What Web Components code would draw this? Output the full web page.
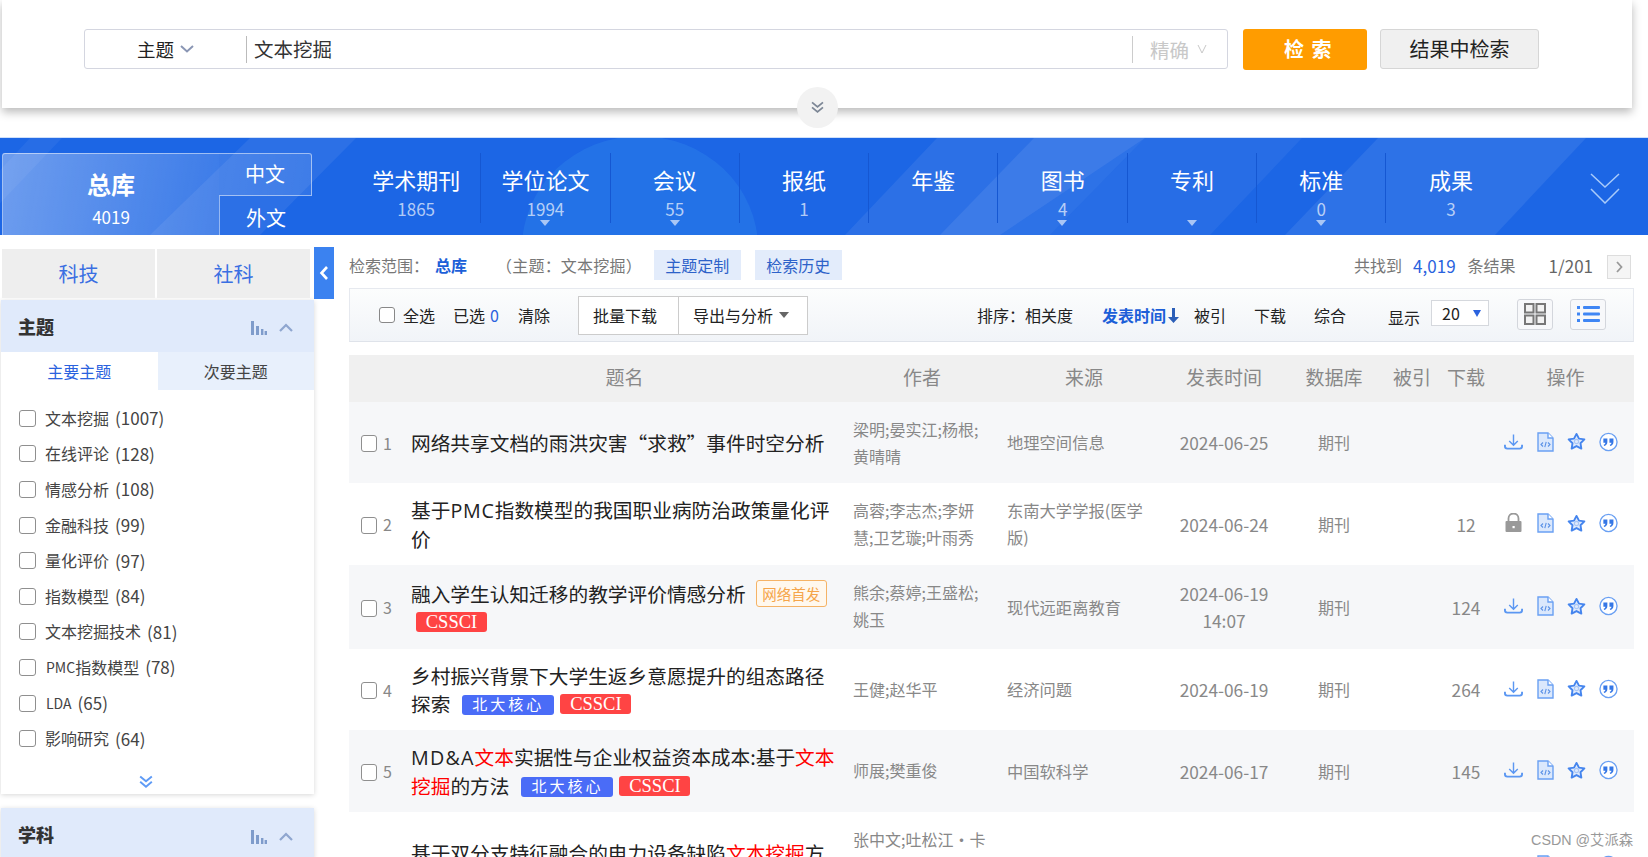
<!DOCTYPE html>
<html lang="zh">
<head>
<meta charset="utf-8">
<title>文本挖掘</title>
<style>
    html, body {
        margin: 0;
        height: 857px;
        overflow: hidden;
        background: #fff;
        font-family: "Noto Sans CJK SC", "Noto Sans", sans-serif;
        color: #333;
    }
</style>
</head>
<body>
<search-card></search-card>
<db-band>
    <db-item name="学术期刊" count="1865"></db-item>
    <db-item name="学位论文" count="1994" caret></db-item>
    <db-item name="会议" count="55" caret></db-item>
    <db-item name="报纸" count="1"></db-item>
    <db-item name="年鉴"></db-item>
    <db-item name="图书" count="4" caret></db-item>
    <db-item name="专利" caret></db-item>
    <db-item name="标准" count="0" caret></db-item>
    <db-item name="成果" count="3"></db-item>
</db-band>
<page-body>
    <side-bar slot="side">
        <facet-panel name="主题" tabs>
            <facet-item label="文本挖掘" count="1007"></facet-item>
            <facet-item label="在线评论" count="128"></facet-item>
            <facet-item label="情感分析" count="108"></facet-item>
            <facet-item label="金融科技" count="99"></facet-item>
            <facet-item label="量化评价" count="97"></facet-item>
            <facet-item label="指数模型" count="84"></facet-item>
            <facet-item label="文本挖掘技术" count="81"></facet-item>
            <facet-item latin="PMC" label="指数模型" count="78"></facet-item>
            <facet-item latin="LDA" count="65"></facet-item>
            <facet-item label="影响研究" count="64"></facet-item>
        </facet-panel>
        <facet-panel name="学科"></facet-panel>
    </side-bar>
    <result-head></result-head>
    <result-tools></result-tools>
    <result-columns></result-columns>
    <result-row n="1" h="81" shade author="梁明;晏实江;杨根;&#10;黄晴晴" source="地理空间信息" date="2024-06-25">网络共享文档的雨洪灾害“求救”事件时空分析</result-row>
    <result-row n="2" h="82" author="高蓉;李志杰;李妍&#10;慧;卫艺璇;叶雨秀" source="东南大学学报(医学&#10;版)" date="2024-06-24" dl="12" locked>基于<wide-latin style="letter-spacing:.8px">PMC</wide-latin>指数模型的我国职业病防治政策量化评<br>价</result-row>
    <result-row n="3" h="84" shade author="熊余;蔡婷;王盛松;&#10;姚玉" source="现代远距离教育" date="2024-06-19&#10;14:07" dl="124">融入学生认知迁移的教学评价情感分析<row-badge kind="first">网络首发</row-badge><br><row-badge kind="cssci" style="margin-left:5px">CSSCI</row-badge></result-row>
    <result-row n="4" h="81" author="王健;赵华平" source="经济问题" date="2024-06-19" dl="264">乡村振兴背景下大学生返乡意愿提升的组态路径<br>探索<row-badge kind="pku">北大核心</row-badge><row-badge kind="cssci">CSSCI</row-badge></result-row>
    <result-row n="5" h="82" shade author="师展;樊重俊" source="中国软科学" date="2024-06-17" dl="145"><wide-latin style="letter-spacing:1.200px">MD&amp;A</wide-latin><hit-word>文本</hit-word>实据性与企业权益资本成本:基于<hit-word>文本</hit-word><br><hit-word>挖掘</hit-word>的方法<row-badge kind="pku">北大核心</row-badge><row-badge kind="cssci">CSSCI</row-badge></result-row>
    <result-row n="6" h="108" author="张中文;吐松江·卡&#10;" source="" date="" dl="">基于双分支特征融合的电力设备缺陷<hit-word>文本挖掘</hit-word>方<br>&nbsp;</result-row>
</page-body>
<water-mark>CSDN @艾派森</water-mark>

<script>
const chevronDouble = (color, w = 16) => `<svg width="${w}" height="${w * .85}" viewBox="0 0 16 14" fill="none" stroke="${color}" stroke-width="2"><path d="M2 1.5l6 5 6-5M2 7l6 5 6-5"/></svg>`;

const barsIcon = `<svg width="16" height="14" viewBox="0 0 16 14" fill="#7f9ccb"><rect x="0" y="0" width="3" height="14"/><rect x="5" y="5" width="3" height="9"/><rect x="10" y="8" width="2.4" height="6"/><rect x="13.6" y="10" width="2.4" height="4"/></svg>`;

const upIcon = `<svg width="14" height="9" viewBox="0 0 14 9" fill="none" stroke="#8fa6cf" stroke-width="2.2"><path d="M1 8l6-6 6 6"/></svg>`;

const icons = {
    download: `<svg width="20" height="18" viewBox="0 0 20 18" fill="none" stroke="#5b97f2" stroke-width="1.5"><path d="M10 1v11M5.5 8l4.5 4.5L14.5 8"/><path d="M1 12v1.5c0 1.4 1 2.5 2.5 2.5h13c1.500 0 2.500-1.100 2.500-2.500V12" stroke-width="2"/></svg>`,
    lock: `<svg width="19" height="20" viewBox="0 0 19 20"><path d="M4.500 9V5.500a5 5 0 0 1 10 0V9" fill="none" stroke="#999" stroke-width="1.800"/><rect x="1.500" y="8" width="16" height="11" rx="1" fill="#999"/><rect x="8.500" y="13" width="2.200" height="2.200" fill="#fff"/></svg>`,
    file: `<svg width="17" height="20" viewBox="0 0 17 20" fill="#dbe8fc" stroke="#6aa0f3" stroke-width="1.400"><path d="M1 1h10l5 5v13H1z"/><path d="M11 1v5h5" fill="#fff"/><path d="M6 10.500l-2 2 2 2M11 10.500l2 2-2 2M9.200 9.800l-1.400 5.400" fill="none" stroke="#5c92e6" stroke-width="1.100"/></svg>`,
    star: `<svg width="22" height="21" viewBox="0 0 20 19" fill="#dfeafc" stroke="#4585ee" stroke-width="2" stroke-linejoin="round"><path d="M10 1.500l2.600 5 5.700.8-4.100 4 .9 5.700-5.100-2.700L4.900 17l.9-5.700-4.100-4 5.700-.8z"/><circle cx="10" cy="9.500" r="2.200" fill="none" stroke="#a9c6f5" stroke-width="1.200"/></svg>`,
    quote: `<svg width="20" height="20" viewBox="0 0 20 20"><circle cx="10" cy="10" r="9" fill="#fff" stroke="#6aa0f3" stroke-width="1.400"/><path d="M4.600 6.200h4.200v3.800c0 2.200-1.200 3.600-3.400 4.200l-.5-1.200c1.200-.4 1.700-1.100 1.800-2.100H4.600zM11 6.200h4.200v3.800c0 2.200-1.200 3.600-3.400 4.200l-.5-1.200c1.200-.4 1.700-1.100 1.800-2.100H11z" fill="#3577e6"/></svg>`,
};

class SearchCard extends HTMLElement {
    constructor() {
        super();
        this.attachShadow({ mode: 'open' }).innerHTML = `
<style>
    :host {
        display: flex;
        position: relative;
        box-sizing: border-box;
        align-items: flex-start;
        margin-left: 2px;
        width: 1630px;
        height: 108px;
        padding: 29px 0 0 82px;
        background: #fff;
        box-shadow: 0 4px 9px rgba(0,0,0,.28);
    }
    .box {
        display: flex;
        align-items: center;
        box-sizing: border-box;
        width: 1144px;
        height: 40px;
        border: 1px solid #d4d6e0;
        border-radius: 3px;
    }
    .field {
        display: flex;
        align-items: center;
        gap: 6px;
        box-sizing: border-box;
        width: 162px;
        height: 27px;
        padding-left: 52px;
        border-right: 1px solid #bbb;
        font-size: 18.500px;
        color: #222;
    }
    .query {
        flex: 1;
        padding-left: 7px;
        font-size: 19.500px;
        color: #333;
        line-height: 25px;
        margin-top: -2px;
    }
    .exact {
        display: flex;
        align-items: center;
        box-sizing: border-box;
        width: 95px;
        height: 27px;
        padding-left: 17px;
        gap: 8px;
        border-left: 1px solid #ccc;
        font-size: 19.500px;
        color: #c8c8c8;
    }
    .go {
        box-sizing: border-box;
        width: 124px;
        height: 41px;
        margin-left: 15px;
        padding-left: 7px;
        background: #ff9c00;
        border-radius: 3px;
        color: #fff;
        font-size: 20px;
        font-weight: 700;
        letter-spacing: 1.500px;
        line-height: 40px;
        text-align: center;
    }
    .inner {
        box-sizing: border-box;
        width: 159px;
        height: 40px;
        margin-left: 13px;
        background: #f0f0f0;
        border: 1px solid #d6d6d6;
        border-radius: 3px;
        color: #222;
        font-size: 20px;
        line-height: 38px;
        text-align: center;
    }
    .more {
        position: absolute;
        left: 795px;
        top: 87px;
        width: 41px;
        height: 41px;
        display: flex;
        align-items: center;
        justify-content: center;
        border-radius: 50%;
        background: #f2f2f2;
    }
</style>
<div class="box">
    <div class="field">主题 <svg width="14" height="8" viewBox="0 0 14 8" fill="none" stroke="#8a96b4" stroke-width="2"><path d="M1 1l6 5.500L13 1"/></svg></div>
    <div class="query">文本挖掘</div>
    <div class="exact">精确 <svg width="10" height="10" viewBox="0 0 10 10" fill="none" stroke="#c8c8c8" stroke-width="1"><path d="M1 1l4 8 4-8"/></svg></div>
</div>
<div class="go">检 索</div>
<div class="inner">结果中检索</div>
<div class="more">${chevronDouble('#7d8796', 15)}</div>`;
    }
}
customElements.define('search-card', SearchCard);

class DbBand extends HTMLElement {
    constructor() {
        super();
        this.attachShadow({ mode: 'open' }).innerHTML = `
<style>
    :host {
        display: flex;
        position: relative;
        box-sizing: border-box;
        height: 98px;
        margin-top: 29px;
        padding: 15px 0 0 2px;
        background: #1c66e5;
        overflow: hidden;
        border-top: 1px solid #cfe0fa;
    }
    .art { position: absolute; left: 0; top: 0; }
    .total {
        position: relative;
        display: flex;
        width: 310px;
        height: 82px;
        color: #fff;
    }
    .main {
        box-sizing: border-box;
        width: 217px;
        padding-top: 12px;
        text-align: center;
        background: linear-gradient(100deg, rgba(255,255,255,.36), rgba(255,255,255,.14));
        border: solid rgba(255,255,255,.5);
        border-width: 1px 0 0 1px;
        border-top-left-radius: 3px;
    }
    .main b { display: block; font-size: 24px; line-height: 36px; }
    .main span { display: block; font-size: 17px; line-height: 24px; margin-top: 3px; }
    .langs { width: 93px; }
    .langs div {
        box-sizing: border-box;
        text-align: center;
        font-size: 20px;
    }
    .zh {
        height: 43px;
        line-height: 40px;
        background: linear-gradient(100deg, rgba(255,255,255,.14), rgba(255,255,255,.09));
        border: solid rgba(255,255,255,.5);
        border-width: 1px 1px 1px 0;
        border-top-right-radius: 3px;
    }
    .en {
        height: 39px;
        line-height: 44px;
        border-left: 1px solid rgba(255,255,255,.5);
    }
    .items { position: relative; display: flex; margin-left: 40px; }
    .fold { position: absolute; left: 1590px; top: 35px; }
</style>
<svg class="art" width="1648" height="97" viewBox="0 0 1648 97" fill="#fff">
    <polygon points="30,0 62,0 -30,97 -60,97" opacity=".05"/>
    <polygon points="250,0 356,0 260,97 150,97" opacity=".07"/>
    <ellipse cx="640" cy="110" rx="118" ry="112" fill="#2a7cea" opacity=".55"/>
    <polygon points="937,0 1145,0 1000,97 845,97" opacity=".07"/>
    <polygon points="1034,0 1145,0 1050,97 940,97" opacity=".08"/>
    <polygon points="1145,0 1302,0 1210,97 1050,97" opacity=".05"/>
    <polygon points="1378,0 1586,0 1495,97 1285,97" opacity=".08"/>
</svg>
<div class="total">
    <div class="main"><b>总库</b><span>4019</span></div>
    <div class="langs">
        <div class="zh">中文</div>
        <div class="en">外文</div>
    </div>
</div>
<div class="items"><slot></slot></div>
<svg class="fold" width="30" height="31" viewBox="0 0 30 31" fill="none" stroke="#a9cbfa" stroke-width="1.500"><path d="M1 1l14 13L29 1M1 16l14 14 14-14"/></svg>`;
    }
}
customElements.define('db-band', DbBand);

class DbItem extends HTMLElement {
    constructor() {
        super();
        const count = this.getAttribute('count');
        this.attachShadow({ mode: 'open' }).innerHTML = `
<style>
    :host {
        display: block;
        position: relative;
        box-sizing: border-box;
        width: 129.300px;
        height: 70px;
        border-right: 1px solid #1557d2;
        text-align: center;
        color: #fff;
    }
    :host(:last-child) { border-right: 0; }
    .name { font-size: 22px; line-height: 30px; margin-top: 11px; }
    .count { font-size: 17px; line-height: 20px; margin-top: 5px; color: rgba(255,255,255,.68); }
    .caret {
        position: absolute;
        left: 59px;
        bottom: -3px;
        width: 0;
        height: 0;
        border: 5.500px solid transparent;
        border-top: 6px solid #a9c6f5;
        border-bottom: 0;
    }
</style>
<div class="name">${this.getAttribute('name')}</div>
${count !== null ? `<div class="count">${count}</div>` : ''}
${this.hasAttribute('caret') ? '<div class="caret"></div>' : ''}`;
    }
}
customElements.define('db-item', DbItem);

class PageBody extends HTMLElement {
    constructor() {
        super();
        this.attachShadow({ mode: 'open' }).innerHTML = `
<style>
    :host { display: flex; align-items: flex-start; padding-left: 1px; }
    .toggle {
        display: flex;
        align-items: center;
        justify-content: center;
        flex: none;
        width: 20px;
        height: 52px;
        margin-top: 12px;
        background: #3b82f0;
    }
    main { flex: none; width: 1285px; margin-left: 15px; padding-top: 15px; }
</style>
<slot name="side"></slot>
<div class="toggle"><svg width="10" height="16" viewBox="0 0 10 16" fill="none" stroke="#fff" stroke-width="2.600"><path d="M8 2L2.500 8 8 14"/></svg></div>
<main><slot></slot></main>`;
    }
}
customElements.define('page-body', PageBody);

class SideBar extends HTMLElement {
    constructor() {
        super();
        this.attachShadow({ mode: 'open' }).innerHTML = `
<style>
    :host { display: block; flex: none; width: 313px; padding-top: 14px; }
    .tabs { display: flex; gap: 2px; padding: 0 4px 0 1px; }
    .tabs div {
        flex: 1;
        height: 49px;
        line-height: 49px;
        text-align: center;
        background: #eee;
        color: #3a6fe2;
        font-size: 20px;
    }
</style>
<div class="tabs"><div>科技</div><div>社科</div></div>
<slot></slot>`;
    }
}
customElements.define('side-bar', SideBar);

class FacetPanel extends HTMLElement {
    constructor() {
        super();
        const tabs = this.hasAttribute('tabs');
        this.attachShadow({ mode: 'open' }).innerHTML = `
<style>
    :host {
        display: block;
        margin-top: 2px;
        background: #fff;
        box-shadow: 0 1px 5px rgba(0,0,0,.16);
    }
    :host(:not([tabs])) { margin-top: 14px; }
    .head {
        display: flex;
        align-items: center;
        height: 52px;
        padding-left: 17px;
        background: #e0eafb;
        font-size: 18px;
        font-weight: 700;
        color: #333;
    }
    .head b { flex: 1; }
    .head svg { margin-top: 3px; }
    .head svg:last-child { margin: 3px 21px 0 12px; }
    :host(:not([tabs])) .head svg { margin-top: 6px; }
    .sub { display: flex; height: 38px; line-height: 38px; font-size: 16px; text-align: center; }
    .sub div { flex: 1; background: #e8f0fc; color: #444; }
    .sub div:first-child { background: #fff; color: #2a62de; }
    .list { padding-top: 10px; }
    .foot { display: flex; justify-content: center; height: 38px; padding: 19px 24px 0 0; box-sizing: border-box; }
</style>
<div class="head"><b>${this.getAttribute('name')}</b>${barsIcon}${upIcon}</div>
${tabs ? `<div class="sub"><div>主要主题</div><div>次要主题</div></div>
<div class="list"><slot></slot></div>
<div class="foot">${chevronDouble('#5f9bf6', 16)}</div>` : ''}`;
    }
}
customElements.define('facet-panel', FacetPanel);

class FacetItem extends HTMLElement {
    constructor() {
        super();
        const latin = this.getAttribute('latin');
        const label = this.getAttribute('label') || '';
        this.attachShadow({ mode: 'open' }).innerHTML = `
<style>
    :host {
        display: flex;
        align-items: center;
        height: 35.6px;
        padding-left: 18px;
        font-size: 16px;
        color: #444;
    }
    i {
        flex: none;
        box-sizing: border-box;
        width: 17px;
        height: 17px;
        margin: 1px 9px 0 0;
        border: 1.500px solid #8f8f8f;
        border-radius: 3px;
        background: #fff;
    }
    small { font-size: 14px; margin-left: 1px; }
    span { margin-left: 6px; font-size: 17px; }
</style>
<i></i>${latin ? `<small>${latin}</small>` : ''}${label}<span>(${this.getAttribute('count')})</span>`;
    }
}
customElements.define('facet-item', FacetItem);

class ResultHead extends HTMLElement {
    constructor() {
        super();
        this.attachShadow({ mode: 'open' }).innerHTML = `
<style>
    :host {
        display: flex;
        align-items: center;
        height: 30px;
        font-size: 16px;
        color: #777;
    }
    b { margin-left: 6px; color: #1c5fd8; }
    .scope { margin-left: 29px; letter-spacing: .2px; }
    .pill {
        height: 30px;
        line-height: 30px;
        padding: 0 11.500px;
        background: #e3ecfb;
        color: #2d62c9;
    }
    .pill.first { margin-left: 12px; }
    .pill + .pill { margin-left: 14px; }
    .right { margin-left: auto; display: flex; align-items: center; }
    .right em { font-style: normal; font-size: 17px; color: #2a62de; margin: 0 12px 0 11px; }
    .page { margin-left: 33px; font-size: 17px; color: #666; }
    .next {
        display: flex;
        align-items: center;
        justify-content: center;
        box-sizing: border-box;
        width: 24px;
        height: 24px;
        margin: 3px 3px 0 14px;
        border: 1px solid #ddd;
        background: #f5f5f5;
    }
</style>
<span>检索范围：</span><b>总库</b>
<span class="scope">（主题：文本挖掘）</span>
<span class="pill first">主题定制</span><span class="pill">检索历史</span>
<div class="right">
    共找到<em>4,019</em>条结果
    <span class="page">1/201</span>
    <span class="next"><svg width="7" height="12" viewBox="0 0 7 12" fill="none" stroke="#999" stroke-width="1.800"><path d="M1 1l4.500 5L1 11"/></svg></span>
</div>`;
    }
}
customElements.define('result-head', ResultHead);

class ResultTools extends HTMLElement {
    constructor() {
        super();
        this.attachShadow({ mode: 'open' }).innerHTML = `
<style>
    :host {
        display: flex;
        align-items: center;
        box-sizing: border-box;
        height: 54px;
        margin-top: 8px;
        padding-left: 29px;
        border: 1px solid #e6e9ef;
        border-bottom: 1.500px solid #dfe3ea;
        background: linear-gradient(#fcfdfd, #f1f4f8);
        font-size: 16px;
        color: #222;
    }
    i {
        box-sizing: border-box;
        width: 16px;
        height: 16px;
        margin-right: 8px;
        border: 1.500px solid #888;
        border-radius: 3px;
        background: #fff;
    }
    .sel { margin-left: 18px; }
    .sel em { font-style: normal; color: #2a62de; margin-left: 5px; }
    .clear { margin-left: 19px; }
    .btns { display: flex; margin-left: 28px; background: #fff; border: 1px solid #ccc; height: 37px; }
    .btns > span { display: flex; align-items: center; justify-content: center; gap: 6px; white-space: nowrap; }
    .btns > span:first-child { box-sizing: border-box; width: 100px; padding-right: 7px; border-right: 1px solid #ccc; }
    .btns > span:last-child { box-sizing: border-box; width: 128px; padding-right: 4px; }
    .tri { width: 0; height: 0; border: 5px solid transparent; border-top: 6px solid #666; border-bottom: 0; }
    .sort { margin-left: auto; display: flex; align-items: center; }
    .sort b { margin-left: 29px; color: #1c5fd8; display: flex; align-items: center; gap: 2px; }
    .sort u { text-decoration: none; margin-left: 28px; }
    .sort u:nth-of-type(1) { margin-left: 15px; }
    .show { margin-left: 42px; padding-top: 4px; }
    .num {
        display: flex;
        align-items: center;
        justify-content: space-between;
        box-sizing: border-box;
        width: 58px;
        height: 26px;
        margin: -4px 0 0 11px;
        padding: 0 7px 0 10px;
        border: 1px solid #d5d8dd;
        background: #fff;
        font-size: 16px;
    }
    .blue { width: 0; height: 0; border: 4.500px solid transparent; border-top: 7px solid #2a62de; border-bottom: 0; }
    .view {
        display: flex;
        align-items: center;
        justify-content: center;
        box-sizing: border-box;
        width: 36px;
        height: 31px;
        margin: -2px 0 0 17px;
        border: 1px solid #d3d6dc;
        border-radius: 3px;
        background: #f7f8fa;
    }
    .view.first { margin-left: 28px; }
    .view.last { margin-right: 27px; }
</style>
<i></i>全选
<span class="sel">已选<em>0</em></span>
<span class="clear">清除</span>
<div class="btns"><span>批量下载</span><span>导出与分析 <em class="tri"></em></span></div>
<div class="sort">
    <span>排序：相关度</span>
    <b>发表时间<svg width="11" height="15" viewBox="0 0 11 15" fill="#2c5fb8"><path d="M4 0h3v9h4l-5.500 6L0 9h4z"/></svg></b>
    <u>被引</u><u>下载</u><u>综合</u>
    <span class="show">显示</span>
    <span class="num">20<span class="blue"></span></span>
    <span class="view first"><svg width="22" height="22" viewBox="0 0 22 22" fill="#f2f2f2" stroke="#777" stroke-width="2"><rect x="1" y="1" width="8.500" height="8.500"/><rect x="12.500" y="1" width="8.500" height="8.500"/><rect x="1" y="12.500" width="8.500" height="8.500"/><rect x="12.500" y="12.500" width="8.500" height="8.500"/></svg></span>
    <span class="view last"><svg width="23" height="18" viewBox="0 0 23 18" fill="#3f86f4"><rect x="0" y="1" width="3" height="3"/><rect x="6" y="1" width="17" height="3" rx="1"/><rect x="0" y="7.500" width="3" height="3"/><rect x="6" y="7.500" width="17" height="3" rx="1"/><rect x="0" y="14" width="3" height="3"/><rect x="6" y="14" width="17" height="3" rx="1"/></svg></span>
</div>`;
    }
}
customElements.define('result-tools', ResultTools);

// column widths shared by the header and the rows
const resultColumns = '62px 441px 155px 162px 110px 110px 46px 62px 137px';

class ResultColumns extends HTMLElement {
    constructor() {
        super();
        this.attachShadow({ mode: 'open' }).innerHTML = `
<style>
    :host {
        display: grid;
        grid-template-columns: ${resultColumns};
        align-items: center;
        height: 47px;
        margin-top: 13px;
        background: #f0f0f0;
        color: #888;
        font-size: 19px;
        line-height: 26px;
        text-align: center;
    }
    span { margin-top: -3px; white-space: nowrap; }
    .t { grid-column: 1 / 3; padding-left: 48px; }
    .a { margin-left: -15px; }
    .s { margin-left: -8px; }
</style>
<span class="t">题名</span><span class="a">作者</span><span class="s">来源</span><span>发表时间</span><span>数据库</span><span>被引</span><span>下载</span><span>操作</span>`;
    }
}
customElements.define('result-columns', ResultColumns);

class ResultRow extends HTMLElement {
    constructor() {
        super();
        const attr = name => this.getAttribute(name) || '';
        const lines = text => text.split('\n').join('<br>');
        this.attachShadow({ mode: 'open' }).innerHTML = `
<style>
    :host {
        display: grid;
        grid-template-columns: ${resultColumns};
        align-items: center;
        height: ${attr('h')}px;
        font-size: 16px;
        color: #888;
    }
    :host([shade]) { background: #f6f7f9; }
    .no { display: flex; align-items: center; padding-left: 12px; font-size: 16px; color: #888; }
    i {
        flex: none;
        box-sizing: border-box;
        width: 16px;
        height: 17px;
        margin: 2px 6px 0 0;
        border: 1.500px solid #8f8f8f;
        border-radius: 3px;
        background: #fff;
    }
    .title { font-size: 19.700px; line-height: 27.500px; color: #222; white-space: nowrap; }
    .auth, .src { line-height: 27px; white-space: nowrap; }
    .src { font-size: 16.300px; }
    .auth { padding-left: 1px; line-height: 27.300px; }
    .auth { align-self: start; padding-top: 13.500px; }
    .auth.one { align-self: center; padding-top: 0; }
    .mid { text-align: center; line-height: 27px; }
    .num { font-size: 17.300px; }
    .ops { display: flex; align-items: center; padding-left: 7px; gap: 12.500px; margin-top: -2px; }
    .ops span { display: flex; justify-content: center; width: 19px; }
</style>
<div class="no"><i></i>${attr('n')}</div>
<div class="title"><slot></slot></div>
<div class="auth ${attr('author').includes('\n') ? '' : 'one'}">${lines(attr('author'))}</div>
<div class="src">${lines(attr('source'))}</div>
<div class="mid num">${lines(attr('date'))}</div>
<div class="mid">${attr('date') ? '期刊' : ''}</div>
<div class="mid"></div>
<div class="mid num">${attr('dl')}</div>
<div class="ops">
    <span>${this.hasAttribute('locked') ? icons.lock : icons.download}</span>
    <span>${icons.file}</span>
    <span>${icons.star}</span>
    <span>${icons.quote}</span>
</div>`;
    }
}
customElements.define('result-row', ResultRow);

class RowBadge extends HTMLElement {
    constructor() {
        super();
        this.attachShadow({ mode: 'open' }).innerHTML = `
<style>
    :host {
        display: inline-block;
        box-sizing: border-box;
        vertical-align: 1.500px;
        margin-left: 6px;
        border-radius: 3px;
        color: #fff;
        height: 20px;
        line-height: 20px;
        width: 71px;
        text-align: center;
        font-size: 18.500px;
        font-family: "Liberation Serif", "Noto Sans CJK SC", serif;
    }
    :host([kind="cssci"]) { background: #ff4444; }
    :host([kind="pku"]) { background: #4a6cf7; margin-left: 12px; width: 92px; letter-spacing: 3px; font-size: 15px; }
    :host([kind="first"]) {
        width: 71px;
        height: 27px;
        line-height: 25px;
        margin-left: 10px;
        vertical-align: 2px;
        background: #fff8ee;
        border: 1px solid #f5b366;
        color: #f5a54a;
        font-size: 14.500px;
        font-family: "Noto Sans CJK SC", sans-serif;
    }
</style>
<slot></slot>`;
    }
}
customElements.define('row-badge', RowBadge);

class HitWord extends HTMLElement {
    constructor() {
        super();
        this.attachShadow({ mode: 'open' }).innerHTML = `<style>:host { color: #f00; }</style><slot></slot>`;
    }
}
customElements.define('hit-word', HitWord);

class WideLatin extends HTMLElement {
    constructor() {
        super();
        this.attachShadow({ mode: 'open' }).innerHTML = `<style>:host { display: inline; font-family: "Open Sans", sans-serif; }</style><slot></slot>`;
    }
}
customElements.define('wide-latin', WideLatin);

class WaterMark extends HTMLElement {
    constructor() {
        super();
        this.attachShadow({ mode: 'open' }).innerHTML = `
<style>
    :host {
        position: absolute;
        right: 15px;
        top: 829px;
        font-family: "Liberation Sans", "Noto Sans CJK SC", sans-serif;
        font-size: 14.300px;
        line-height: 22px;
        color: #999;
    }
</style>
<slot></slot>`;
    }
}
customElements.define('water-mark', WaterMark);
</script>
</body>
</html>
